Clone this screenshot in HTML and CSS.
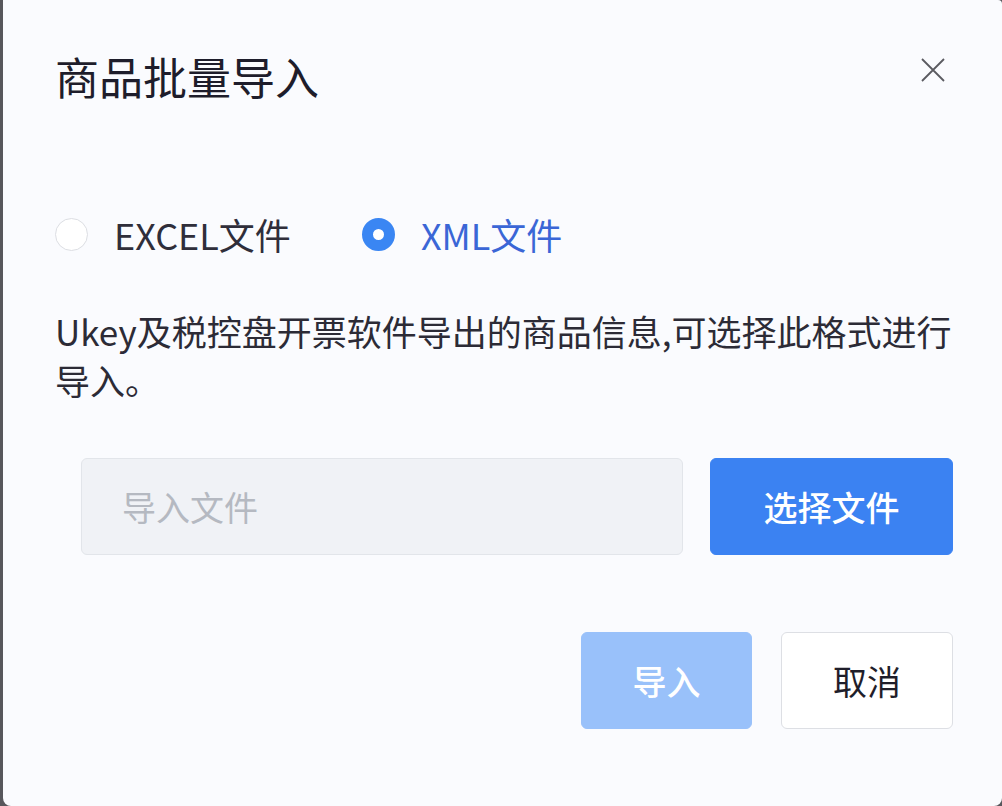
FILE: index.html
```html
<!DOCTYPE html>
<html lang="zh-CN">
<head>
<meta charset="utf-8">
<title>商品批量导入</title>
<link rel="stylesheet" href="styles.css">
</head>
<body>
<div class="dialog">
  <div class="header">
    <h1 class="title">商品批量导入</h1>
    <button class="close" aria-label="关闭">
      <svg width="26" height="26" viewBox="0 0 26 26"><path d="M2 2 L24 24 M24 2 L2 24" stroke="#5a5a60" stroke-width="1.8" fill="none"/></svg>
    </button>
  </div>
  <div class="radios">
    <label class="radio"><span class="dot"></span><span class="label">EXCEL文件</span></label>
    <label class="radio checked"><span class="dot"></span><span class="label">XML文件</span></label>
  </div>
  <p class="desc">Ukey及税控盘开票软件导出的商品信息,可选择此格式进行导入。</p>
  <div class="file-row">
    <div class="file-input">导入文件</div>
    <button class="btn primary">选择文件</button>
  </div>
  <div class="footer">
    <button class="btn disabled">导入</button>
    <button class="btn plain">取消</button>
  </div>
</div>
</body>
</html>
```
FILE: styles.css
```css
html, body {
  margin: 0;
  padding: 0;
  height: 100%;
}
body {
  background: #57575c;
  font-family: "Noto Sans CJK SC", "Noto Sans", sans-serif;
  overflow: hidden;
}
.dialog {
  margin-left: 3px;
  height: 806px;
  box-sizing: border-box;
  background: #fafbfe;
  border-radius: 0 4px 8px 8px;
  padding: 50px 49px 0 52px;
}
.header {
  display: flex;
  justify-content: space-between;
  align-items: flex-start;
}
.title {
  margin: 0;
  font-size: 44px;
  font-weight: 400;
  line-height: 53px;
  color: #1e1d2b;
}
.close {
  border: 0;
  background: none;
  padding: 0;
  margin: 7px 7px 0 0;
  width: 26px;
  height: 26px;
}
.radios {
  display: flex;
  gap: 71px;
  margin-top: 111px;
  height: 40px;
  align-items: center;
}
.radio {
  display: flex;
  align-items: center;
  gap: 26px;
  font-size: 36px;
  color: #2f2e3a;
}
.radio .dot {
  width: 33px;
  height: 33px;
  box-sizing: border-box;
  border: 1px solid #dcdee3;
  border-radius: 50%;
  background: #fff;
}
.radio.checked .dot {
  border: 11px solid #3a86f3;
  background: #fff;
}
.radio.checked {
  color: #3a66d6;
}
.desc {
  margin: 52px 0 0;
  font-size: 35px;
  line-height: 49px;
  color: #2c2b36;
}
.file-row {
  display: flex;
  gap: 27px;
  margin: 54px 0 0 26px;
}
.file-input {
  flex: 1;
  height: 97px;
  box-sizing: border-box;
  background: #f0f2f6;
  border: 1px solid #e2e5ea;
  border-radius: 6px;
  padding-left: 40px;
  display: flex;
  align-items: center;
  font-size: 34px;
  color: #b5b9c1;
}
.btn {
  font-family: inherit;
  height: 97px;
  box-sizing: border-box;
  border-radius: 6px;
  font-size: 34px;
  padding: 0;
}
.btn.primary {
  width: 243px;
  background: #3b82f2;
  border: 1px solid #3b82f2;
  color: #fff;
  font-weight: 500;
}
.footer {
  display: flex;
  justify-content: flex-end;
  gap: 29px;
  margin-top: 77px;
}
.btn.disabled {
  width: 171px;
  background: #99c1fa;
  border: 1px solid #99c1fa;
  color: #fff;
  font-weight: 500;
}
.btn.plain {
  width: 172px;
  background: #fff;
  border: 1px solid #dddfe4;
  color: #1f1e2a;
}
```
